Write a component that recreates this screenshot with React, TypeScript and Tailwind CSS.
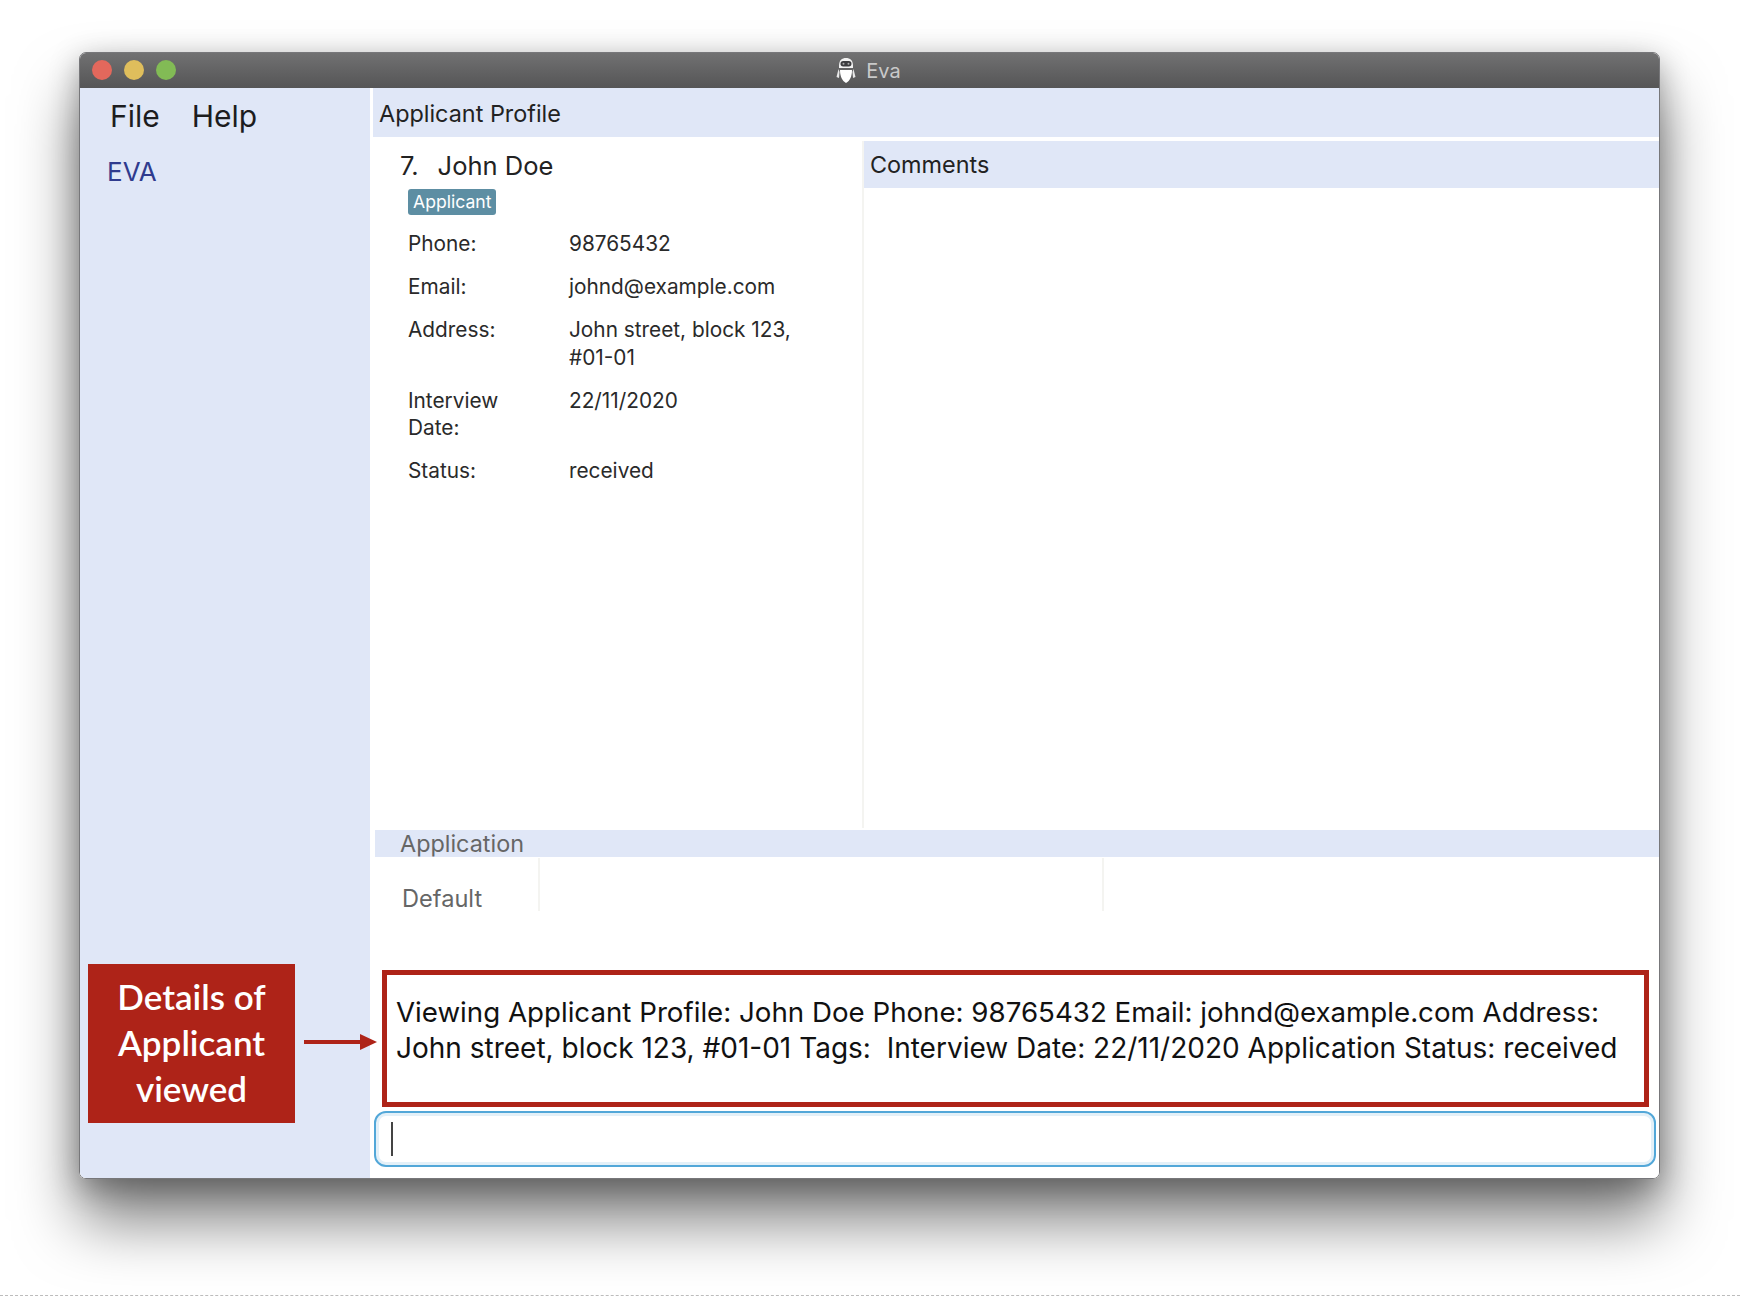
import React from 'react';

const details = [
  { label: 'Phone:', value: '98765432' },
  { label: 'Email:', value: 'johnd@example.com' },
  { label: 'Address:', value: 'John street, block 123, #01-01' },
  { label: 'Interview Date:', value: '22/11/2020' },
  { label: 'Status:', value: 'received' },
];

// Little robot icon next to the window title
const RobotIcon = () => (
  <svg width="20" height="27" viewBox="0 0 20 27" className="shrink-0">
    <path d="M3 9 C3 3 6 1 10 1 C14 1 17 3 17 9 L17 11 L3 11 Z" fill="#f2f2f2" />
    <rect x="4.5" y="4" width="11" height="5.5" rx="2.7" fill="#3d3d40" />
    <circle cx="7.5" cy="6.7" r="1" fill="#aaa" />
    <circle cx="12.5" cy="6.7" r="1" fill="#aaa" />
    <path d="M4 13 H16 C16 19 14 24 10 26 C6 24 4 19 4 13 Z" fill="#fff" />
    <path d="M2.5 12 L0.5 20 L3 21 L3.5 15 Z" fill="#e8e8e8" />
    <path d="M17.5 12 L19.5 20 L17 21 L16.5 15 Z" fill="#e8e8e8" />
  </svg>
);

const App: React.FC = () => {
  return (
    <div className="relative h-[1296px] w-[1740px] overflow-hidden bg-white pl-[79px] pt-[52px] font-['Inter',sans-serif]">
      {/* Window */}
      <div className="relative flex h-[1127px] w-[1581px] flex-col overflow-hidden rounded-[7px] border border-[#77777a] shadow-[0_42px_62px_rgba(0,0,0,0.5),0_8px_30px_rgba(0,0,0,0.3)]">
        {/* Title bar */}
        <div className="relative flex h-[35px] shrink-0 items-center justify-center bg-gradient-to-b from-[#717172] to-[#555556]">
          <div className="absolute left-[12px] top-[7px] flex gap-3">
            <span className="h-5 w-5 rounded-full bg-[#e3685c]" />
            <span className="h-5 w-5 rounded-full bg-[#dfbe5c]" />
            <span className="h-5 w-5 rounded-full bg-[#82bb55]" />
          </div>
          <div className="mr-[2px] flex items-center gap-[10px]">
            <RobotIcon />
            <span className="text-[20px] text-[#c9c9c9]">Eva</span>
          </div>
        </div>

        <div className="flex min-h-0 flex-1 bg-white">
          {/* Sidebar */}
          <div className="w-[290px] shrink-0 bg-[#e0e7f7]">
            <div className="flex gap-[32px] pl-[30px] pt-[7px] text-[30px] leading-[42px] text-[#1c1c1e]">
              <span>File</span>
              <span>Help</span>
            </div>
            <div className="pl-[27px] pt-[19px] text-[26px] leading-[32px] text-[#2f3b8e]">EVA</div>
          </div>

          {/* Main column */}
          <div className="flex min-w-0 flex-1 flex-col pl-[3px]">
            <div className="flex h-[49px] shrink-0 items-center bg-[#e0e7f7] pl-[6px] pt-[3px] text-[23.4px] text-[#222]">
              Applicant Profile
            </div>

            <div className="mt-1 flex h-[687px] shrink-0">
              {/* Profile */}
              <div className="w-[491px] shrink-0 border-r-2 border-[#f4f4f1] pl-[27px]">
                <div className="flex gap-[19px] pt-[9px] text-[25.5px] leading-[32px] text-[#222]">
                  <span>7.</span>
                  <span>John Doe</span>
                </div>
                <div className="ml-2 mt-[7px] inline-block h-[26px] rounded-[3px] bg-[#5d8ea3] px-[5px] text-[17.6px] leading-[26px] text-white">
                  Applicant
                </div>
                <div className="ml-2 mt-[15px] flex flex-col gap-[15.5px] text-[20.8px] leading-[27.5px] text-[#2a2a2a]">
                  {details.map((row) => (
                    <div key={row.label} className="flex">
                      <div className="w-[161px] shrink-0 pr-10">{row.label}</div>
                      <div className="w-[240px]">{row.value}</div>
                    </div>
                  ))}
                </div>
              </div>

              {/* Comments */}
              <div className="min-w-0 flex-1">
                <div className="flex h-[47px] items-center bg-[#e0e7f7] pl-[6px] pt-[1px] text-[23.4px] text-[#222]">Comments</div>
              </div>
            </div>

            {/* Application */}
            <div className="ml-[2px] mt-[2px] flex h-[27px] shrink-0 items-center bg-[#e0e7f7] pl-[25px] text-[23.4px] text-[#666]">
              Application
            </div>
            <div className="mt-px flex h-[53px] shrink-0 text-[23.6px] text-[#666]">
              <div className="ml-[2px] flex w-[165px] items-end border-r-2 border-[#f4f4f1] pl-[27px] leading-[24px]">
                Default
              </div>
              <div className="w-[564px] border-r-2 border-[#f4f4f1]" />
            </div>

            {/* Result box */}
            <div className="ml-[9px] mt-[59px] h-[137px] w-[1267px] shrink-0 border-[5px] border-[#ae2318] bg-white pl-[9px] pt-[20px] leading-[35.5px] text-[#111]">
              <div className="whitespace-nowrap text-[27.7px]">
                Viewing Applicant Profile: John Doe Phone: 98765432 Email: johnd@example.com Address:
              </div>
              <div className="whitespace-nowrap text-[28px]">
                John street, block 123, #01-01 Tags:&nbsp; Interview Date: 22/11/2020 Application Status: received
              </div>
            </div>

            {/* Command box */}
            <div className="ml-px mt-[4px] flex h-[56px] w-[1282px] shrink-0 items-center rounded-[12px] border-2 border-[#52a7d8] bg-white pl-[15px] shadow-[inset_0_0_0_3px_#e3f0f8]">
              <span className="h-[34px] w-[2px] bg-[#444]" />
            </div>
          </div>
        </div>

        {/* Annotation label */}
        <div className="absolute left-[8px] top-[911px] flex h-[159px] w-[207px] items-center justify-center bg-[#ae2318] pb-[4px] text-center font-['Lato',sans-serif] text-[35px] font-semibold leading-[46px] text-white">
          <div>
            Details of
            <br />
            Applicant
            <br />
            viewed
          </div>
        </div>
        <svg className="absolute left-[224px] top-[979px]" width="74" height="20" viewBox="0 0 74 20">
          <rect x="0" y="8" width="58" height="4" fill="#ae2318" />
          <path d="M56 2 L73 10 L56 18 Z" fill="#ae2318" />
        </svg>
      </div>

      {/* Dashed line at the bottom of the page */}
      <div className="absolute bottom-0 left-0 w-full border-b border-dashed border-[#bcbcbc]" />
    </div>
  );
};

export default App;
